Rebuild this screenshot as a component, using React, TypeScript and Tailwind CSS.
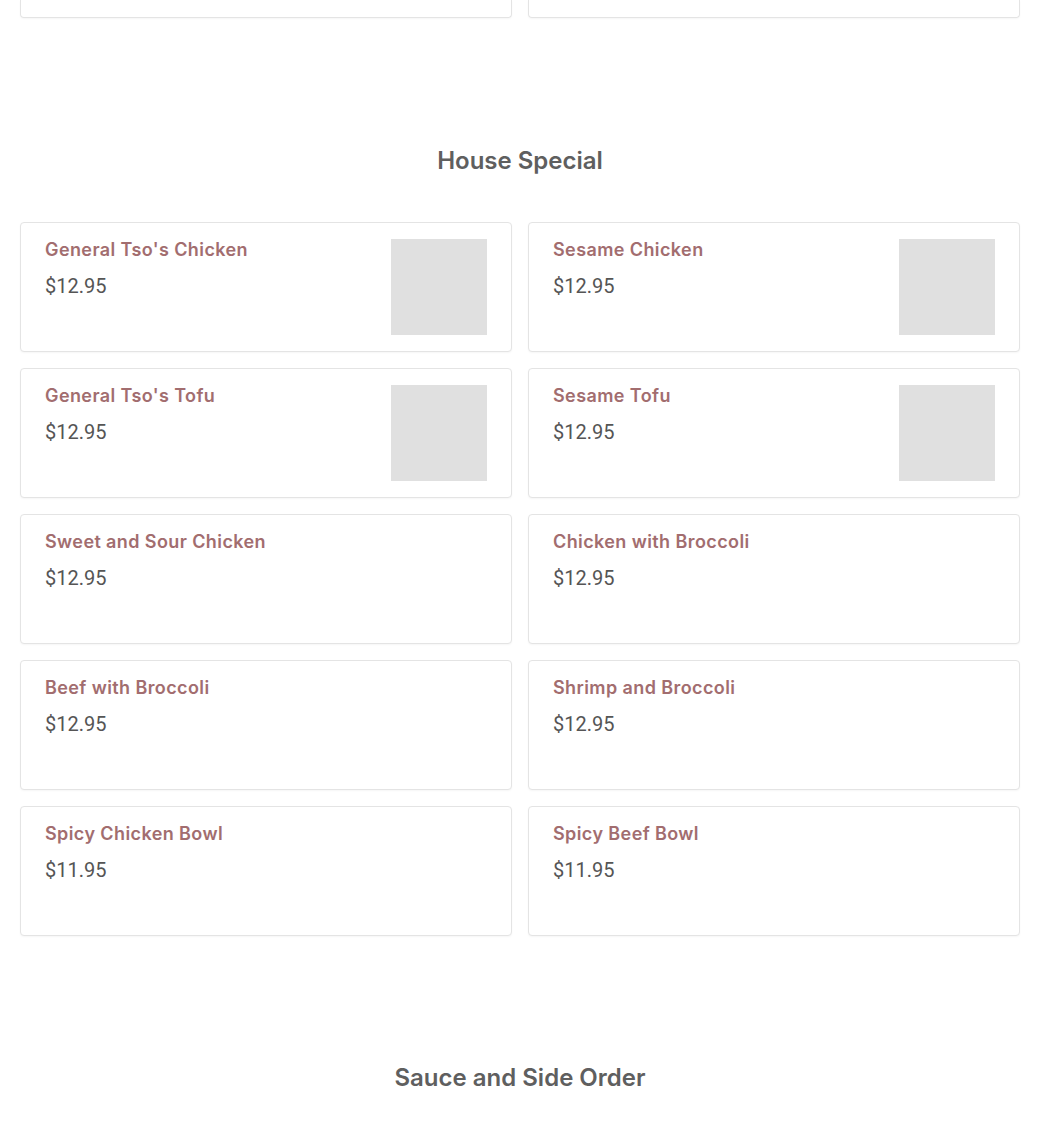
import React from 'react';

type Item = { name: string; price: string; image?: boolean };

const houseSpecial: Item[] = [
  { name: "General Tso's Chicken", price: '$12.95', image: true },
  { name: 'Sesame Chicken', price: '$12.95', image: true },
  { name: "General Tso's Tofu", price: '$12.95', image: true },
  { name: 'Sesame Tofu', price: '$12.95', image: true },
  { name: 'Sweet and Sour Chicken', price: '$12.95' },
  { name: 'Chicken with Broccoli', price: '$12.95' },
  { name: 'Beef with Broccoli', price: '$12.95' },
  { name: 'Shrimp and Broccoli', price: '$12.95' },
  { name: 'Spicy Chicken Bowl', price: '$11.95' },
  { name: 'Spicy Beef Bowl', price: '$11.95' },
];

function MenuCard({ item }: { item: Item }) {
  return (
    <div className="h-[130px] bg-white border border-[#e4e4e4] rounded shadow-[0_1px_2px_rgba(0,0,0,0.04)] flex justify-between pl-6 pr-6">
      <div className="pt-[13px]">
        <h3 className="font-['Inter',sans-serif] font-semibold text-[18px] leading-[28px] tracking-[0.4px] text-[#a26d6f]">
          {item.name}
        </h3>
        <p className="mt-2 font-['Roboto',sans-serif] text-[20px] leading-[28px] text-[#555555]">
          {item.price}
        </p>
      </div>
      {item.image && <div className="mt-4 w-24 h-24 bg-[#e0e0e0] shrink-0" />}
    </div>
  );
}

function SectionTitle({ children }: { children: React.ReactNode }) {
  return (
    <h2 className="text-center font-['Inter',sans-serif] font-semibold text-[24px] leading-[32px] text-[#5f5f5f]">
      {children}
    </h2>
  );
}

export default function App() {
  return (
    <div className="min-h-screen bg-white px-5">
      <div className="grid grid-cols-2 gap-4">
        <div className="h-[18px] border border-t-0 border-[#e4e4e4] rounded-b shadow-[0_1px_2px_rgba(0,0,0,0.04)]" />
        <div className="h-[18px] border border-t-0 border-[#e4e4e4] rounded-b shadow-[0_1px_2px_rgba(0,0,0,0.04)]" />
      </div>

      <section className="pt-[127px]">
        <SectionTitle>House Special</SectionTitle>
        <div className="mt-[45px] grid grid-cols-2 gap-4">
          {houseSpecial.map((item) => (
            <MenuCard key={item.name} item={item} />
          ))}
        </div>
      </section>

      <section className="pt-[126px]">
        <SectionTitle>Sauce and Side Order</SectionTitle>
      </section>
    </div>
  );
}
